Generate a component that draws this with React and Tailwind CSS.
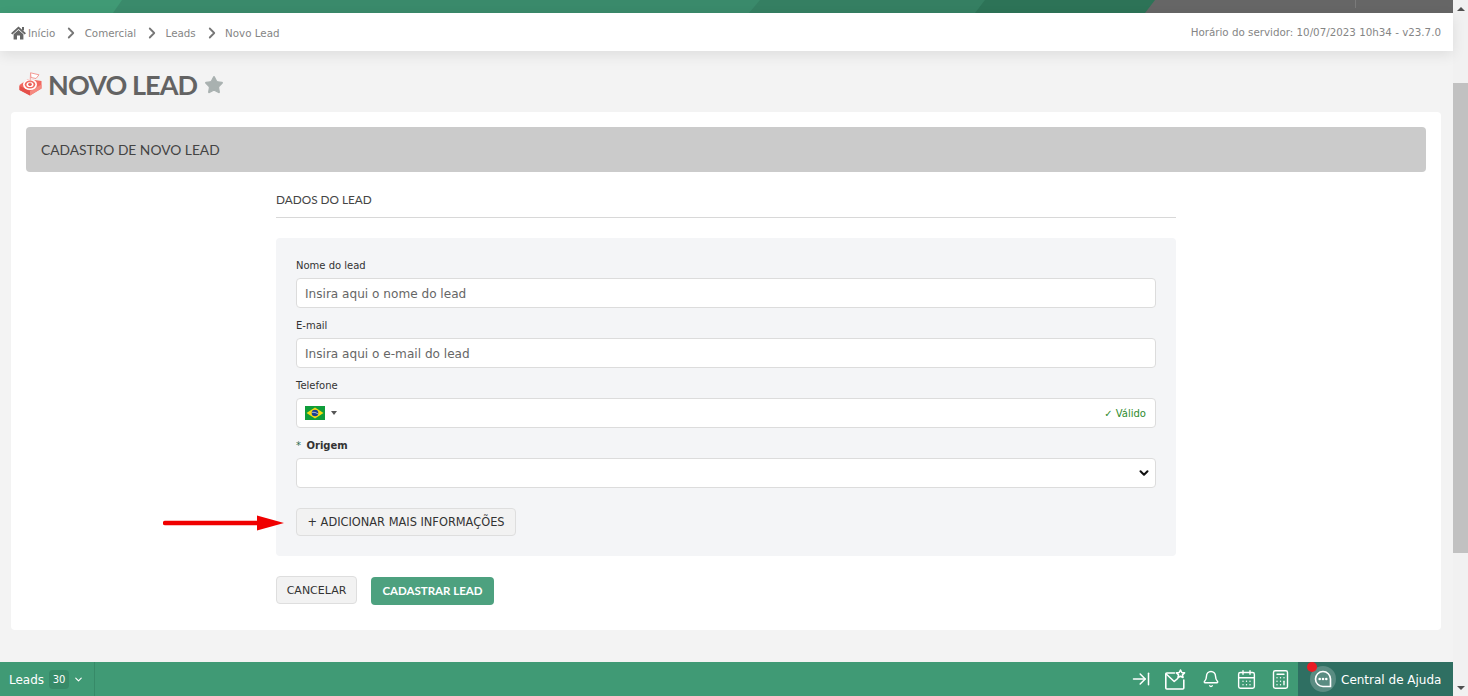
import { ArrowRightToLine, Bell, Calculator, CalendarDays, ChevronDown, ChevronRight, Star } from "lucide-react";

const body = "font-['DejaVu_Sans',Verdana,sans-serif]";
const lato = "font-['Lato',sans-serif]";

const crumbs = ["Comercial", "Leads", "Novo Lead"];

const TopStripe = () => (
  <svg className="block h-[13px] w-full shrink-0" viewBox="0 0 1453 13" preserveAspectRatio="none">
    <rect width="1453" height="13" fill="#666666" />
    <polygon points="0,0 1155,0 1145,13 0,13" fill="#2d7357" />
    <polygon points="0,0 985,0 975,13 0,13" fill="#357f62" />
    <polygon points="0,0 760,0 749,13 0,13" fill="#3a8a6b" />
    <polygon points="0,0 122,0 113,13 0,13" fill="#409a75" />
    <rect x="1355" y="0" width="1" height="8" fill="#7a7a7a" />
  </svg>
);

const HomeIcon = () => (
  <svg width="15" height="14" viewBox="0 0 15 14" fill="#666" className="shrink-0">
    <path d="M7.5 0.5 L15 7.2 L13.6 8.4 L7.5 3 L1.4 8.4 L0 7.2 Z" />
    <path d="M2.6 8.2 L7.5 3.9 L12.4 8.2 V13.5 H9 V9.6 H6 V13.5 H2.6 Z" />
    <rect x="11" y="1" width="2" height="3.5" />
  </svg>
);

const TargetLogo = () => (
  <svg width="23" height="24" viewBox="0 0 23 24" className="shrink-0">
    <polygon points="0.5,13 9,7 22.5,9 22.5,16.5 11,23.5 0.5,18" fill="#f2675f" />
    <polygon points="0.5,14 11,19 11,23.5 0.5,18" fill="#e4504a" />
    <polygon points="11,19 22.5,12.5 22.5,16.5 11,23.5" fill="#f58a80" />
    <ellipse cx="11" cy="12.5" rx="7" ry="5.5" fill="#fff" />
    <ellipse cx="11" cy="12.5" rx="5.3" ry="4" fill="#f2675f" />
    <ellipse cx="11" cy="12.5" rx="3.5" ry="2.6" fill="#fff" />
    <ellipse cx="11" cy="12.5" rx="1.8" ry="1.4" fill="#e4504a" />
    <path d="M11 12.5 L11.5 2" stroke="#f2908a" strokeWidth="0.8" fill="none" />
    <path d="M11.5 0.8 L20 2.8 L17 6.5 L12 5.5 Z" fill="#fff" stroke="#f2908a" strokeWidth="0.9" />
  </svg>
);

const Flag = () => (
  <svg width="20" height="14" viewBox="0 0 20 14" className="shrink-0">
    <rect width="20" height="14" fill="#0f9d3a" />
    <polygon points="10,1.5 18.5,7 10,12.5 1.5,7" fill="#f7d914" />
    <circle cx="10" cy="7" r="3.3" fill="#1d3f8f" />
    <path d="M7 6.3 Q10 5.8 13 7.8" stroke="#fff" strokeWidth="0.6" fill="none" />
  </svg>
);

const MailStar = () => (
  <svg width="21" height="21" viewBox="0 0 21 21" fill="none" stroke="#fff" strokeWidth="1.6" strokeLinejoin="round" strokeLinecap="round">
    <path d="M9.5 4H1.8a1 1 0 0 0-1 1v14a1 1 0 0 0 1 1h16a1 1 0 0 0 1-1v-8" />
    <path d="M1.2 5l8 7.5 3.5-3" />
    <path d="M15.5 1l1.3 2.5 2.7.4-2 1.9.5 2.7-2.5-1.3-2.5 1.3.5-2.7-2-1.9 2.7-.4z" />
  </svg>
);

const ChatIcon = () => (
  <svg width="18" height="18" viewBox="0 0 18 18" fill="none">
    <path d="M9 1.5a7.5 7.5 0 1 0 0 15h7.5V9A7.5 7.5 0 0 0 9 1.5z" stroke="#fff" strokeWidth="1.6" />
    <circle cx="5.7" cy="9" r="1.3" fill="#fff" />
    <circle cx="9" cy="9" r="1.3" fill="#fff" />
    <circle cx="12.3" cy="9" r="1.3" fill="#fff" />
  </svg>
);

const Field = ({ label, placeholder }) => (
  <div className="h-[60px]">
    <div className="h-[20px] pt-[1px] text-[10px] leading-[14px] text-[#333]">{label}</div>
    <div className="flex h-[30px] items-center rounded-[4px] border border-[#dcdcdc] bg-white px-2 pt-[2px] text-[12.1px] text-[#666]">
      {placeholder}
    </div>
  </div>
);

export default function App() {
  return (
    <div className={`flex h-[696px] w-[1468px] overflow-hidden bg-[#f3f3f3] ${body}`}>
      <div className="flex w-[1453px] shrink-0 flex-col">
        <TopStripe />

        {/* breadcrumb */}
        <div className="z-10 flex h-[38px] shrink-0 items-center justify-between bg-white pl-[11px] pr-[12px] pt-[2px] text-[#858585] shadow-[0_4px_14px_rgba(0,0,0,0.09)]">
          <div className="flex items-center text-[10.3px] leading-[14px]">
            <HomeIcon />
            <span className="ml-[2px]">Início</span>
            {crumbs.map((c) => (
              <div key={c} className="flex items-center">
                <ChevronRight size={18} strokeWidth={2.4} className="ml-[7px] mr-[4.4px] text-[#777]" />
                <span>{c}</span>
              </div>
            ))}
          </div>
          <div className="mt-[-2px] text-[10.3px] leading-[14px]">Horário do servidor: 10/07/2023 10h34 - v23.7.0</div>
        </div>

        {/* title */}
        <div className={`flex h-[61px] shrink-0 items-center pl-[19px] pt-[5px] ${lato}`}>
          <TargetLogo />
          <h1 className="ml-[6px] text-[27px] font-bold leading-none tracking-[-0.9px] text-[#636363]">NOVO LEAD</h1>
          <Star size={20} fill="#a9b1b0" stroke="#a9b1b0" strokeWidth={1.5} className="ml-[7px] mt-[2px]" />
        </div>

        {/* card */}
        <div className="ml-[11px] mr-[12px] flex h-[518px] shrink-0 flex-col rounded-[4px] bg-white px-[15px] pt-[15px]">
          <div className={`flex h-[45px] shrink-0 items-center rounded-[4px] bg-[#cbcbcb] pl-[15px] pt-[2px] text-[13.8px] text-[#444] ${lato}`}>
            CADASTRO DE NOVO LEAD
          </div>

          <div className="mx-auto w-[900px]">
            <div className={`flex h-[46px] items-end border-b border-[#d8d8d8] pb-[8px] text-[11.8px] text-[#444] ${lato}`}>
              DADOS DO LEAD
            </div>

            <div className="relative mt-[20px] h-[318px] rounded-[4px] bg-[#f4f5f7] px-[20px] pt-[20px]">
              <Field label="Nome do lead" placeholder="Insira aqui o nome do lead" />
              <Field label="E-mail" placeholder="Insira aqui o e-mail do lead" />

              <div className="h-[60px]">
                <div className="h-[20px] pt-[1px] text-[10px] leading-[14px] text-[#333]">Telefone</div>
                <div className="flex h-[30px] items-center justify-between rounded-[4px] border border-[#dcdcdc] bg-white pl-[8px] pr-[9px]">
                  <div className="flex items-center">
                    <Flag />
                    <span className="ml-[6px] h-0 w-0 border-x-[3px] border-t-[4px] border-x-transparent border-t-[#555]" />
                  </div>
                  <span className="text-[10px] text-[#2e8b2e]">✓ Válido</span>
                </div>
              </div>

              <div className="h-[60px]">
                <div className="h-[20px] pt-[1px] text-[10px] font-bold leading-[14px] text-[#333]">
                  <span className="mr-[2px] font-normal text-[#2e6b4f]">*</span> Origem
                </div>
                <div className="flex h-[30px] items-center justify-end rounded-[4px] border border-[#dcdcdc] bg-white pr-[4px]">
                  <ChevronDown size={14} strokeWidth={3.5} className="text-[#111]" />
                </div>
              </div>

              <button className="mt-[10px] flex h-[28px] w-[220px] items-center justify-center rounded-[4px] border border-[#dedede] bg-[#f2f2f2] pt-[2px] text-[11.4px] text-[#333]">
                + ADICIONAR MAIS INFORMAÇÕES
              </button>

              {/* annotation arrow */}
              <svg width="124" height="18" viewBox="0 0 124 18" className="absolute left-[-113px] top-[276px]">
                <path d="M2 9H100" stroke="#f00000" strokeWidth="4.5" strokeLinecap="round" />
                <polygon points="94,1.5 121,9 94,16.5" fill="#f00000" />
              </svg>
            </div>

            <div className="mt-[20px] flex items-start">
              <button className="flex h-[28px] w-[81px] items-center justify-center rounded-[4px] border border-[#dedede] bg-[#f2f2f2] pt-[2px] text-[11px] text-[#333]">
                CANCELAR
              </button>
              <button className={`ml-[14px] mt-[1px] flex h-[28px] w-[123px] items-center justify-center rounded-[4px] bg-[#4da17f] text-[11.5px] font-bold text-white ${lato}`}>
                CADASTRAR LEAD
              </button>
            </div>
          </div>
        </div>

        {/* bottom bar */}
        <div className="mt-auto flex h-[34px] shrink-0 items-stretch justify-between bg-[#409a75] text-white">
          <div className="flex w-[95px] items-center border-r border-[#378a68] pl-[9px] pt-[1px] text-[12px]">
            Leads
            <span className="ml-[5px] flex h-[19px] w-[20px] items-center justify-center rounded-[4px] bg-[#378a68] text-[10px]">30</span>
            <ChevronDown size={11} strokeWidth={2.5} className="ml-[4px]" />
          </div>
          <div className="flex items-stretch">
            <div className="flex items-center pr-[7px]">
              <ArrowRightToLine size={20} strokeWidth={1.8} />
              <span className="ml-[14px]"><MailStar /></span>
              <Bell size={18} strokeWidth={1.9} className="ml-[16px]" />
              <CalendarDays size={21} strokeWidth={1.6} className="ml-[16px]" />
              <Calculator size={21} strokeWidth={1.6} className="ml-[13px]" />
            </div>
            <div className="flex w-[155px] items-center bg-[#2f6f62] pl-[12px] text-[12px]">
              <div className="relative flex h-[26px] w-[26px] items-center justify-center rounded-full bg-[#5a8c82]">
                <ChatIcon />
                <span className="absolute left-[-3px] top-[-4px] h-[10px] w-[10px] rounded-full bg-[#e81c24]" />
              </div>
              <span className="ml-[5px] pt-[1px]">Central de Ajuda</span>
            </div>
          </div>
        </div>
      </div>

      {/* scrollbar */}
      <div className="flex w-[15px] shrink-0 flex-col bg-[#f1f1f1]">
        <div className="flex h-[17px] items-center justify-center">
          <span className="h-0 w-0 border-x-[4px] border-b-[4px] border-x-transparent border-b-[#505050]" />
        </div>
        <div className="mt-[66px] h-[470px] bg-[#c1c1c1]" />
        <div className="mt-auto flex h-[17px] items-center justify-center">
          <span className="h-0 w-0 border-x-[4px] border-t-[4px] border-x-transparent border-t-[#505050]" />
        </div>
      </div>
    </div>
  );
}
